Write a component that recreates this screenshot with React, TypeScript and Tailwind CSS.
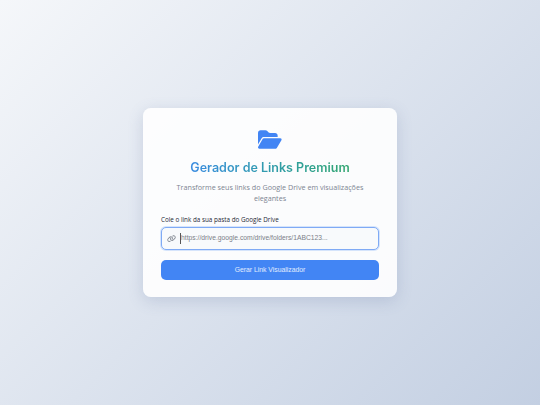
import { FaFolderOpen, FaLink } from "react-icons/fa6";

export default function App() {
  return (
    <div className="flex h-[405px] w-[540px] items-center justify-center overflow-hidden bg-linear-[135deg] from-[#f5f7fa] to-[#c3cfe2] font-['Open_Sans',sans-serif]">
      <div className="flex w-[254px] flex-col rounded-[8px] bg-white/90 px-[18px] pt-[19px] pb-[17px] shadow-[0_4px_16px_rgba(80,100,150,0.2)]">
        <div className="flex h-[24px] items-center justify-center">
          <FaFolderOpen className="h-[21px] w-[23.6px] text-[#4285f4]" />
        </div>
        <h1 className="mt-[7px] bg-linear-to-r from-[#4285f4] to-[#34a853] bg-clip-text text-center font-['Inter',sans-serif] text-[12.5px] leading-[20px] font-semibold text-transparent">
          Gerador de Links Premium
        </h1>
        <p className="mx-auto mt-[4px] w-[205px] text-center text-[7.2px] leading-[10.5px] text-[#7d8592]">
          Transforme seus links do Google Drive em visualizações elegantes
        </p>
        <label className="mt-[12px] text-[6.3px] leading-[10px] font-medium text-[#1f2937]">
          Cole o link da sua pasta do Google Drive
        </label>
        <div className="mt-[2px] flex h-[23px] items-center gap-[4px] rounded-[5px] border-[1.5px] border-[#7faaf5] bg-[#f8fafc] px-[4.5px] shadow-[0_0_0_1px_rgba(66,133,244,0.2)]">
          <FaLink className="h-[7.2px] w-[9px] text-[#858b95]" />
          <span className="border-l border-[#555] pl-[0.5px] font-['Liberation_Sans',sans-serif] text-[6.75px] text-[#7b8088]">
            https://drive.google.com/drive/folders/1ABC123...
          </span>
        </div>
        <button className="mt-[10px] h-[20px] rounded-[5px] bg-[#4285f4] font-['Liberation_Sans',sans-serif] text-[6.8px] text-white/85">
          Gerar Link Visualizador
        </button>
      </div>
    </div>
  );
}
